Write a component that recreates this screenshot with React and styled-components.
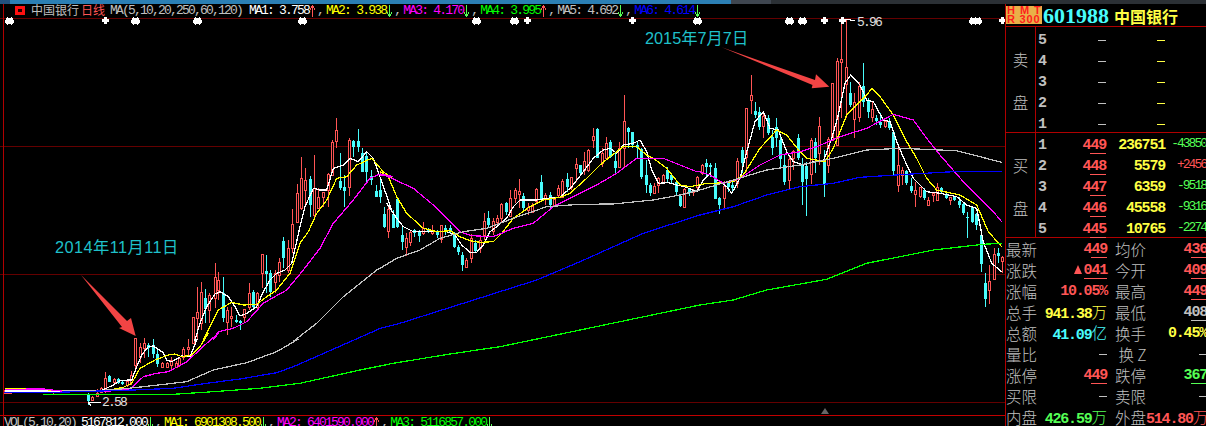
import React from 'react';
import styled, { createGlobalStyle } from 'styled-components';

const RED = '#ff5555';
const CYAN = '#48fcfc';
const GREEN = '#55ff55';
const YELLOW = '#ffff44';
const GRAY = '#c0c0c0';
const LINE = '#b00000';
const GRID = '#640000';
const MONO = '"Liberation Mono", monospace';
const CJK = '"Liberation Sans", "Noto Sans CJK SC", sans-serif';

const Global = createGlobalStyle`
  html, body { margin: 0; padding: 0; background: #000; overflow: hidden; }
`;

const Screen = styled.div`
  width: 1206px; height: 426px; background: #000; overflow: hidden;
  display: flex; flex-direction: column;
`;
const TopStrip = styled.div`
  height: 4px; flex: none; display: flex; background: #2b3035;
`;
const StripPart = styled.div`
  width: ${p => p.$w}px; background: ${p => p.$bg};
`;
const Body = styled.div`
  flex: 1; min-height: 0; display: flex;
`;
const Main = styled.div`
  position: relative; width: 1005px; flex: none; display: flex; flex-direction: column;
  &::before {
    content: ''; position: absolute; left: 3px; top: 0; bottom: 0; width: 1px; background: ${LINE};
  }
`;
const StatusBar = styled.div`
  flex: none; box-sizing: border-box; height: 15px; border-bottom: 1px solid ${GRID};
  display: flex; align-items: center; padding-left: 15px; white-space: pre;
`;
const VolBar = styled.div`
  flex: none; box-sizing: border-box; height: 11px; border-top: 1px solid #c00000;
  display: flex; align-items: flex-start; padding-left: 4px; white-space: pre; overflow: hidden;
`;
const Logo = styled.span`
  width: 4px; height: 3px; border: 3px solid #ff1010; flex: none; margin-bottom: 2px;
  background: #200;
`;
const Name = styled.span`
  font: 12px/14px ${CJK}; color: ${p => p.$c}; margin-left: ${p => p.$ml || 0}px;
`;
const Mono = styled.span`
  font: 13px/${p => p.$lh || 14}px ${MONO}; letter-spacing: -1.8px; color: ${p => p.$c};
  margin-left: ${p => p.$ml || 0}px;
`;
const Comma = styled(Mono)`
  margin-right: 3px;
`;
const ArrowBox = styled.svg`
  display: block; width: 8px; height: ${p => p.$lh || 14}px; flex: none;
`;
const Segment = styled.span`
  display: inline-flex;
`;

const Side = styled.div`
  position: relative; flex: 1; box-sizing: border-box; border-left: 1px solid ${LINE};
  background: #000; overflow: hidden; display: flex; flex-direction: column;
`;
const SideHead = styled.div`
  height: 23px; flex: none; box-sizing: border-box; border-bottom: 1px solid ${LINE};
  display: flex; align-items: center; padding-top: 1px;
`;
const Badge = styled.div`
  width: 36px; height: 18px; background: #e9b048; color: #ff1c1c; margin-bottom: 2px;
  font: bold 11px/9px "Liberation Sans", sans-serif; flex: none; padding-left: 1px; box-sizing: border-box;
`;
const BadgeLine = styled.div`
  letter-spacing: ${p => p.$ls || 0}px; white-space: pre;
`;
const Code = styled.span`
  font: bold 22px/22px "Liberation Serif", serif; color: ${CYAN}; margin-left: 1px;
`;
const StockName = styled.span`
  font: bold 16px/22px "Noto Sans CJK SC", sans-serif; color: ${YELLOW}; margin-left: 5px;
`;
const Book = styled.div`
  flex: none; box-sizing: border-box; height: ${p => p.$h}px; border-bottom: 1px solid ${LINE};
  display: flex;
`;
const BookSide = styled.div`
  width: 30px; box-sizing: border-box; border-right: 1px solid ${LINE}; flex: none;
  display: flex; flex-direction: column; align-items: center; justify-content: center; gap: 27px;
  padding-top: 2px;
  font: 15.5px/16px "Noto Sans CJK SC", sans-serif; font-weight: 300; color: ${GRAY};
`;
const BookRows = styled.div`
  flex: 1; display: flex; flex-direction: column; padding-top: ${p => p.$pt}px;
`;
const BookRow = styled.div`
  height: 21px; flex: none; display: flex; align-items: center; position: relative;
`;
const Level = styled.span`
  font: bold 15px/21px ${MONO}; color: ${GRAY}; width: 11px; margin-left: 2px; flex: none;
`;
const Num = styled.span`
  font: bold 15px/21px ${MONO}; letter-spacing: -1.2px; color: ${p => p.$c};
  text-align: right; flex: none; white-space: pre;
  ${p => p.$w ? `width: ${p.$w}px;` : ''}
`;
const Under = styled.span`
  display: inline-block; line-height: 15px; border-bottom: 1px solid currentColor;
`;
const Dash = styled.span`
  width: 8px; height: 1px; background: ${p => p.$c}; flex: none; margin-left: ${p => p.$ml || 0}px;
`;
const Delta = styled.span`
  position: absolute; right: 0; top: 2px;
  font: 13px/14px ${MONO}; letter-spacing: -2px; color: ${p => p.$c};
`;
const Stats = styled.div`
  flex: 1; display: flex; flex-direction: column; margin-top: 1px;
`;
const StatRow = styled.div`
  height: 21px; flex: none; display: flex; align-items: center; justify-content: space-between;
`;
const StatCell = styled.div`
  display: flex; align-items: center; justify-content: space-between;
  width: ${p => p.$w}px; flex: none; padding-left: ${p => p.$pl || 0}px; box-sizing: border-box;
`;
const Label = styled.span`
  font: 15.5px/21px "Noto Sans CJK SC", sans-serif; font-weight: 300; color: ${GRAY}; white-space: pre; flex: none;
`;
const Unit = styled.span`
  font: 15.5px/21px "Noto Sans CJK SC", sans-serif; font-weight: 300; letter-spacing: 0;
`;
const Triangle = styled.span`
  display: inline-block; width: 0; height: 0; border: 4px solid transparent; border-top: 0;
  border-bottom: 9px solid ${RED}; margin-right: 2px;
`;

const Chart = styled.svg`
  display: block; flex: none; width: 1005px; height: 396px; overflow: visible;
`;
const Note = styled.text`
  font: 16.3px ${CJK}; fill: #1fc0ca; letter-spacing: ${p => p.$ls || 0}px;
`;
const Extreme = styled.text`
  font: 13px ${MONO}; letter-spacing: -1.8px; fill: #e0e0e0;
`;

/* Candles are listed as [x, kind, high, top, bottom, low], in the scale of a 3x view */
const group = (ox, oy, rows) => rows.map(([x, k, h, t, b, l]) => ({
  x: Math.round(ox + x / 3), up: k === 'r',
  h: Math.round(oy + h / 3), t: Math.round(oy + t / 3), b: Math.round(oy + b / 3), l: Math.round(oy + l / 3),
}));
const pts = (ox, oy, rows) => rows.map(([x, y]) => [ox + x / 3, oy + y / 3]);

const candles = [
  ...group(0, 330, [
    [15,'r',180,180,188,188],[24,'r',178,180,188,188],[30,'r',178,180,188,188],[66,'c',182,183,187,189],[130,'c',183,184,188,190],
    [160,'r',180,182,186,196],[265,'c',190,195,212,225],[277,'r',198,200,210,212],[290,'r',178,188,198,200],[303,'r',170,175,185,190],
    [316,'r',125,145,178,190],[328,'c',135,137,155,155],[343,'r',145,148,155,158],[355,'c',143,147,160,162],[367,'c',152,155,162,165],
    [382,'r',148,152,165,170],[394,'r',122,135,155,165],[406,'r',24,24,105,120],[420,'r',40,50,80,100],[433,'r',25,40,55,85],
    [445,'c',40,45,53,80],[460,'c',28,45,73,85],[472,'c',60,72,103,110],[487,'r',95,100,110,115],[500,'r',95,100,110,115],
    [512,'r',80,90,105,120],[527,'r',92,98,110,115],[538,'r',82,85,105,110],[550,'r',50,58,80,90],[565,'r',28,50,58,80],
  ]),
  ...group(100, 110, [
    [278,'r',620,622,699,699],[290,'r',530,605,625,690],[304,'r',517,545,640,660],[316,'c',538,565,598,640],[328,'r',548,555,600,640],
    [344,'r',460,500,565,595],[355,'r',485,510,540,570],[370,'c',500,548,625,635],[382,'r',590,600,635,675],[394,'r',590,618,625,650],
    [409,'c',615,630,635,640],[421,'c',630,632,640,660],[433,'r',598,598,620,640],[448,'r',520,550,590,600],[460,'c',540,545,590,595],
    [472,'r',545,550,590,600],[487,'r',432,432,490,535],[499,'c',435,483,492,550],[511,'c',480,490,545,560],[526,'r',480,490,515,550],
    [538,'r',445,457,495,515],[550,'c',380,393,445,475],[565,'r',390,415,480,490],[577,'r',298,343,415,430],[592,'r',222,250,335,340],
    [604,'r',140,205,295,300],[616,'r',175,210,240,290],[631,'c',198,207,285,320],[643,'r',135,235,315,320],[655,'r',235,260,295,295],
    [670,'r',245,247,262,290],[683,'r',190,192,240,290],[695,'r',90,96,195,195],[709,'r',25,60,92,115],[721,'c',130,213,233,240],
    [733,'c',195,232,243,290],[748,'r',85,90,230,258],[760,'c',90,93,110,140],[775,'c',58,93,110,125],[787,'c',115,130,185,185],
    [799,'c',125,138,185,215],[814,'c',180,198,210,225],[827,'c',225,243,262,262],[839,'c',210,240,260,280],[853,'c',290,312,352,355],
    [865,'r',285,297,362,383],[878,'c',300,312,353,355],[892,'c',265,268,352,355],
  ]),
  ...group(380, 90, [
    [65,'c',405,435,455,480],[77,'r',430,445,470,498],[91,'r',420,425,457,468],[103,'c',418,420,430,440],[117,'c',420,425,437,455],
    [130,'r',395,415,430,435],[143,'c',415,420,425,430],[157,'r',405,420,430,435],[170,'c',420,425,435,445],[182,'r',405,405,448,460],
    [196,'c',405,415,425,435],[209,'c',405,415,425,430],[221,'c',425,428,470,473],[235,'c',465,470,487,495],[247,'c',485,495,525,543],
    [259,'r',505,510,530,532],[273,'r',432,445,505,520],[286,'c',450,458,482,490],[300,'r',440,450,473,490],[313,'r',370,393,435,450],
    [325,'c',362,385,405,415],[340,'r',385,393,422,435],[352,'r',375,385,395,405],[364,'r',340,343,385,395],[379,'c',335,340,365,375],
    [391,'r',300,325,378,380],[404,'r',295,300,325,340],[418,'r',268,303,313,355],[430,'c',310,318,355,365],[443,'r',340,350,360,375],
    [457,'r',340,347,365,370],[469,'r',293,296,332,340],[484,'c',255,275,330,335],[496,'r',310,315,325,345],[510,'c',305,315,345,355],
    [523,'r',320,327,345,350],[535,'r',285,293,315,325],[547,'r',268,272,320,325],[562,'c',250,268,290,305],[574,'r',260,262,290,300],
    [587,'r',205,222,235,275],[601,'c',225,225,250,255],[613,'r',185,213,240,255],[625,'r',178,180,240,245],[640,'r',113,138,150,175],
    [652,'c',115,117,205,205],[667,'r',175,190,218,230],[679,'r',140,160,205,205],[691,'c',150,157,200,205],[706,'c',190,212,235,250],
    [718,'r',155,175,232,232],[731,'r',15,93,175,230],[745,'c',110,115,125,175],[757,'c',125,127,165,175],[772,'c',155,165,175,205],
    [784,'c',175,177,262,268],[797,'c',210,255,285,310],[809,'c',280,285,310,318],[823,'r',280,287,310,312],[835,'r',262,265,285,310],
    [850,'r',252,255,275,282],[862,'c',232,240,268,280],[874,'c',250,255,270,280],[888,'c',270,275,307,315],[901,'c',315,318,348,352],
    [913,'r',295,298,352,355],[928,'c',293,297,306,318],[940,'r',298,303,305,318],[952,'r',258,260,290,302],[967,'r',222,225,250,255],
    [979,'c',208,218,232,260],[990,'c',220,225,232,260],
  ]),
  ...group(700, 15, [
    [46,'c',445,460,552,552],[58,'c',545,550,570,598],[73,'r',497,512,550,580],[85,'c',505,505,515,530],[97,'c',500,510,520,535],
    [112,'r',430,438,505,520],[125,'c',395,405,445,475],[137,'r',280,280,425,470],[152,'r',180,240,255,298],[164,'c',260,288,300,310],
    [176,'c',275,292,335,345],[190,'r',290,303,333,370],[203,'c',300,310,355,360],[215,'c',345,367,400,420],[229,'c',308,335,370,395],
    [241,'c',362,375,432,460],[253,'c',420,450,500,510],[268,'r',420,432,495,522],[280,'r',405,408,430,465],[295,'c',357,370,430,435],
    [307,'c',430,450,500,570],[319,'c',440,452,492,603],[334,'r',370,375,478,508],[346,'c',370,380,430,475],[358,'r',305,333,415,450],
    [373,'c',405,442,510,545],[385,'r',365,372,450,475],[397,'r',205,205,375,375],[412,'r',130,138,390,390],[424,'r',15,133,140,310],
    [437,'r',15,157,208,310],[451,'c',200,235,270,275],[463,'r',235,260,312,370],[478,'r',200,213,305,320],[490,'c',145,213,260,275],
    [503,'c',250,256,290,310],[517,'r',260,282,305,320],[529,'c',300,308,318,330],[541,'c',295,320,330,340],[556,'r',315,318,332,340],
    [568,'c',310,320,340,345],[580,'c',345,352,468,480],[595,'r',390,450,510,530],[607,'r',455,465,480,510],[619,'c',465,468,505,510],
    [634,'c',490,513,528,535],[646,'r',500,525,538,575],[661,'r',515,515,543,550],[673,'c',520,525,550,555],[685,'r',545,555,570,572],
    [700,'r',530,535,540,560],[712,'r',505,515,555,557],[724,'c',515,520,532,535],[739,'c',533,537,550,553],[751,'r',545,547,555,570],
    [763,'c',543,545,555,558],[778,'c',545,557,570,580],[790,'c',560,567,595,600],[802,'c',590,605,610,668],[817,'c',572,576,622,625],
    [829,'c',595,597,630,645],[844,'c',650,660,748,770],[856,'c',775,805,852,875],[868,'r',750,797,825,868],[883,'r',700,717,793,795],
    [895,'c',700,715,722,745],[907,'r',722,727,737,775],
  ]),
];

const toPath = list => list.map(([x, y]) => `${x.toFixed(1)},${y.toFixed(1)}`).join(' ');
const lines = [
  { c: '#ffffff', p: [
    ...pts(0, 330, [[15,183],[130,183],[300,184],[340,165],[360,152],[385,150],[395,150],[410,110],[425,75],[445,50],[460,48],[490,68],[500,90],[515,95],[545,78],[570,80],[590,30]]),
    ...pts(100, 110, [[285,690],[300,640],[320,590],[345,552],[360,545],[385,560],[405,590],[420,618],[440,610],[470,590],[490,545],[510,510],[530,490],[555,480],[575,460],[600,350],[615,290],[640,235],[660,240],[680,240],[700,175],[730,165],[750,145],[775,155],[800,125],[820,145],[845,215],[875,300]]),
    ...pts(380, 90, [[20,340],[50,385],[70,410],[100,425],[130,425],[170,425],[200,425],[225,435],[245,465],[270,487],[290,487],[310,465],[330,425],[350,410],[380,385],[400,350],[420,330],[470,330],[500,325],[540,322],[575,290],[610,245],[640,205],[670,180],[690,175],[710,190],[730,165],[760,160],[780,150],[800,185],[815,240],[835,280],[865,278],[890,285],[915,290],[950,305],[970,270],[990,250]]),
    ...pts(700, 15, [[30,480],[60,500],[80,515],[95,535],[120,490],[135,430],[165,320],[190,290],[210,340],[235,345],[260,410],[280,440],[310,450],[340,440],[370,440],[395,370],[415,300],[435,205],[452,180],[480,210],[500,255],[520,260],[550,315],[570,320],[590,380],[620,450],[640,490],[680,530],[720,535],[770,545],[800,570],[830,580],[850,680],[875,745],[905,770]]),
  ] },
  { c: '#ffff00', p: [
    ...pts(0, 330, [[15,175],[130,177],[160,182],[300,183],[330,180],[370,172],[395,160],[420,115],[465,90],[505,75],[525,72],[545,80],[575,75],[600,50],[625,10]]),
    ...pts(100, 110, [[310,690],[335,640],[355,600],[395,577],[430,585],[470,583],[500,560],[530,540],[570,490],[600,400],[625,365],[650,310],[680,270],[710,205],[740,200],[770,165],[815,145],[850,185],[875,205]]),
    ...pts(380, 90, [[0,245],[25,260],[50,320],[80,370],[130,415],[170,425],[210,422],[240,440],[270,452],[300,457],[340,455],[365,430],[400,385],[450,350],[490,330],[540,322],[570,310],[620,265],[660,225],[690,200],[730,170],[770,170],[800,195],[820,205],[860,235],[900,285],[930,290],[980,280]]),
    ...pts(700, 15, [[45,505],[100,500],[130,480],[180,400],[230,345],[260,360],[300,410],[320,430],[375,440],[400,400],[440,300],[500,240],[515,220],[540,245],[580,300],[620,380],[650,430],[680,490],[710,525],[780,540],[830,570],[865,650],[905,695]]),
  ] },
  { c: '#ff00ff', p: [
    ...pts(0, 330, [[15,178],[130,177],[190,184],[300,184],[330,183],[390,178],[430,140],[470,130],[505,125],[560,95],[620,40],[655,10]]),
    ...pts(100, 110, [[340,690],[355,665],[400,655],[440,635],[490,580],[560,540],[610,480],[660,415],[700,340],[760,270],[810,205],[840,192],[880,200]]),
    ...pts(380, 90, [[0,255],[20,258],[100,295],[160,345],[240,425],[275,437],[340,440],[400,415],[460,400],[520,350],[590,315],[650,285],[710,250],[770,205],[850,205],[950,245]]),
    ...pts(700, 15, [[0,470],[30,480],[70,505],[120,490],[180,450],[240,420],[300,410],[350,395],[420,365],[500,340],[580,298],[640,315],[680,370],[720,420],[790,500],[840,550],[880,590],[905,620]]),
  ] },
  { c: '#c0c0c0', p: [
    ...pts(0, 330, [[190,183],[335,180],[430,170],[560,155],[640,120],[740,98],[830,65],[890,30]]),
    ...pts(100, 110, [[585,690],[650,640],[730,560],[830,480]]),
    ...pts(380, 90, [[0,535],[50,505],[120,480],[180,445],[250,425],[320,415],[400,385],[500,350],[600,343],[700,342],[820,330],[900,315]]),
    ...pts(700, 15, [[0,525],[100,495],[200,465],[300,450],[400,430],[500,405],[600,400],[770,407],[905,442]]),
  ] },
  { c: '#0000ff', p: [
    ...pts(0, 330, [[12,188],[130,188],[400,180],[520,175],[620,160],[720,147],[830,128],[880,110],[960,75],[1130,0]]),
    ...pts(100, 110, [[840,655],[900,640]]),
    ...pts(380, 90, [[470,570],[600,515],[790,430]]),
    ...pts(700, 15, [[0,600],[100,575],[200,540],[300,515],[400,505],[480,487],[620,478],[760,470],[905,470]]),
  ] },
  { c: '#00ff00', p: [
    ...pts(0, 330, [[130,193],[520,193],[640,185],[780,175],[900,160],[1080,120],[1180,100],[1350,72],[1500,50]]),
    ...pts(700, 15, [[0,870],[100,855],[200,825],[380,793],[500,745],[700,705],[850,688],[905,685]]),
  ] },
];

const stars = [9, 135, 197, 302, 476, 514, 697, 789, 802, 973, 977];
const pluses = [105, 527, 632, 824, 842, 1002];

const Star = ({ x }) => (
  <path fill="#fff" shapeRendering="crispEdges"
    d={`M${x - 2} 17h1v1h3v-1h1v1h1v2h1v3h-1v1h-1v1h-1v-1h-3v1h-1v-1h-1v-1h-1v-3h1v-2h1z`} />
);
const Plus = ({ x }) => (
  <path fill="#fff" shapeRendering="crispEdges"
    d={`M${x - 1} 17h3v2h2v3h-2v2h-3v-2h-2v-3h2z`} />
);
const Candle = ({ x, up, h, t, b, l }) => {
  const c = up ? RED : CYAN;
  return (
    <g shapeRendering="crispEdges">
      <rect x={x} y={h} width="1" height={Math.max(l - h, 1)} fill={c} />
      {up
        ? <rect x={x - 0.5} y={t + 0.5} width="2" height={Math.max(b - t, 1)} fill="#000" stroke={c} />
        : <rect x={x - 1} y={t} width="3" height={Math.max(b - t, 1)} fill={c} />}
    </g>
  );
};

const PriceChart = () => (
  <Chart viewBox="0 19 1005 396">
    {[146, 274, 402].map(y => <rect key={y} x="0" y={y} width="1005" height="1" fill={GRID} shapeRendering="crispEdges" />)}
    {candles.map((c, i) => <Candle key={i} {...c} />)}
    {lines.map(l => (
      <polyline key={l.c} points={toPath(l.p)} fill="none" stroke={l.c} strokeWidth="1.25" shapeRendering="crispEdges" />
    ))}
    {stars.map(x => <Star key={x} x={x} />)}
    {pluses.map(x => <Plus key={x} x={x} />)}
    <path d="M846 19 L855 21" stroke="#fff" fill="none" shapeRendering="crispEdges" />
    <Extreme x="857" y="26">5.96</Extreme>
    <path d="M101 402 H88 L91 406" stroke="#fff" fill="none" shapeRendering="crispEdges" />
    <Extreme x="102" y="406">2.58</Extreme>
    <polygon points="81,275 127,321 131,318 135.7,336 119,328 122,327" fill="#f24444" />
    <polygon points="721.7,47.3 815,80 816,74.3 829.3,86.7 811.7,88.3 812.5,85" fill="#f24444" />
    <polygon points="825,408 829,414 821,414" fill="#666" />
    <Note x="645" y="44">2015年7月7日</Note>
    <Note x="55" y="253" $ls={0.45}>2014年11月11日</Note>
  </Chart>
);

const Arrow = ({ up, c, lh }) => (
  <ArrowBox $lh={lh} viewBox={`0 0 8 ${lh || 14}`}>
    <path
      d={up ? 'M3.5 2V13M1 5.5L3.5 2L6 5.5' : 'M3.5 1V12M1 8.5L3.5 12L6 8.5'}
      stroke={c} strokeWidth="1.2" fill="none" shapeRendering="crispEdges"
    />
  </ArrowBox>
);

const Ma = ({ label, value, c, up, comma, lh }) => (
  <Segment>
    <Mono $c={c} $lh={lh}>{label ? `${label}: ` : ''}{value}</Mono>
    <Arrow up={up} c={up ? RED : GREEN} lh={lh} />
    {comma && <Comma $c="#c0c0c0" $lh={lh}>,</Comma>}
  </Segment>
);

const Price = ({ v, c = RED, w }) => (
  <Num $c={c} $w={w}>{v[0]}<Under>{v.slice(1)}</Under></Num>
);

const sells = [5, 4, 3, 2, 1];
const buys = [
  [1, '449', '236751', '-43850', GREEN],
  [2, '448', '5579', '+2456', RED],
  [3, '447', '6359', '-9518', GREEN],
  [4, '446', '45558', '-9316', GREEN],
  [5, '445', '10765', '-2274', GREEN],
];
const G = '#c0c0c0';
const stats = [
  ['最新', <Price v="449" />, '均价', <Price v="436" />],
  ['涨跌', <Num $c={RED}><Triangle /><Under>041</Under></Num>, '今开', <Price v="409" />],
  ['涨幅', <Num $c={RED}>10.05%</Num>, '最高', <Price v="449" />],
  ['总手', <Num $c={YELLOW}>941.38<Unit>万</Unit></Num>, '最低', <Price v="408" c={G} />],
  ['总额', <Num $c={CYAN}>41.09<Unit>亿</Unit></Num>, '换手', <Num $c={YELLOW}>0.45%</Num>],
  ['量比', <Dash $c={G} />, ' 换 Z', <Dash $c={G} />],
  ['涨停', <Price v="449" />, '跌停', <Price v="367" c={GREEN} />],
  ['买限', <Dash $c={G} />, '卖限', <Dash $c={G} />],
  ['内盘', <Num $c={GREEN}>426.59<Unit>万</Unit></Num>, '外盘', <Num $c={RED}>514.80<Unit>万</Unit></Num>],
];

export default function App() {
  return (
    <Screen>
      <Global />
      <TopStrip>
        <StripPart $w={10} $bg="#24527e" />
        <StripPart $w={721} $bg="#2b7fb4" />
        <StripPart $w={40} $bg="#3f4650" />
      </TopStrip>
      <Body>
        <Main>
          <StatusBar>
            <Logo />
            <Name $c="#c0c0c0" $ml={6}>中国银行</Name>
            <Name $c={RED} $ml={2}>日线</Name>
            <Mono $c="#c0c0c0" $ml={5}>MA(5,10,20,250,60,120)</Mono>
            <Mono $c="#c0c0c0" $ml={7} />
            <Ma label="MA1" value="3.758" c="#ffffff" up comma />
            <Ma label="MA2" value="3.938" c="#ffff00" comma />
            <Ma label="MA3" value="4.170" c="#ff00ff" comma />
            <Ma label="MA4" value="3.995" c="#00ff00" up comma />
            <Ma label="MA5" value="4.692" c="#c0c0c0" comma />
            <Ma label="MA6" value="4.614" c="#0000ff" />
          </StatusBar>
          <PriceChart />
          <VolBar>
            <Mono $c="#c0c0c0" $lh={13}>VOL(5,10,20)</Mono>
            <Mono $c="#c0c0c0" $ml={5} $lh={13} />
            <Ma value="5167812.000" c="#ffffff" comma lh={13} />
            <Ma label="MA1" value="6901308.500" c="#ffff00" comma lh={13} />
            <Ma label="MA2" value="6401590.000" c="#ff00ff" up comma lh={13} />
            <Ma label="MA3" value="5116857.000" c="#00ff00" lh={13} />
          </VolBar>
        </Main>
        <Side>
          <SideHead>
            <Badge>
              <BadgeLine $ls={5}>HMT</BadgeLine>
              <BadgeLine $ls={0.8}>R 300</BadgeLine>
            </Badge>
            <Code>601988</Code>
            <StockName>中国银行</StockName>
          </SideHead>
          <Book $h={106}>
            <BookSide><span>卖</span><span>盘</span></BookSide>
            <BookRows $pt={3}>
              {sells.map(n => (
                <BookRow key={n}>
                  <Level>{n}</Level>
                  <Dash $c={G} $ml={49} />
                  <Dash $c={YELLOW} $ml={51} />
                </BookRow>
              ))}
            </BookRows>
          </Book>
          <Book $h={105}>
            <BookSide><span>买</span><span>盘</span></BookSide>
            <BookRows $pt={2}>
              {buys.map(([n, p, vol, d, dc]) => (
                <BookRow key={n}>
                  <Level>{n}</Level>
                  <Price v={p} w={57} />
                  <Num $c={YELLOW} $w={59}>{vol}</Num>
                  <Delta $c={dc}>{d}</Delta>
                </BookRow>
              ))}
            </BookRows>
          </Book>
          <Stats>
            {stats.map(([a, av, b, bv]) => (
              <StatRow key={a}>
                <StatCell $w={101}><Label>{a}</Label>{av}</StatCell>
                <StatCell $w={100} $pl={8}><Label>{b}</Label>{bv}</StatCell>
              </StatRow>
            ))}
          </Stats>
        </Side>
      </Body>
    </Screen>
  );
}
